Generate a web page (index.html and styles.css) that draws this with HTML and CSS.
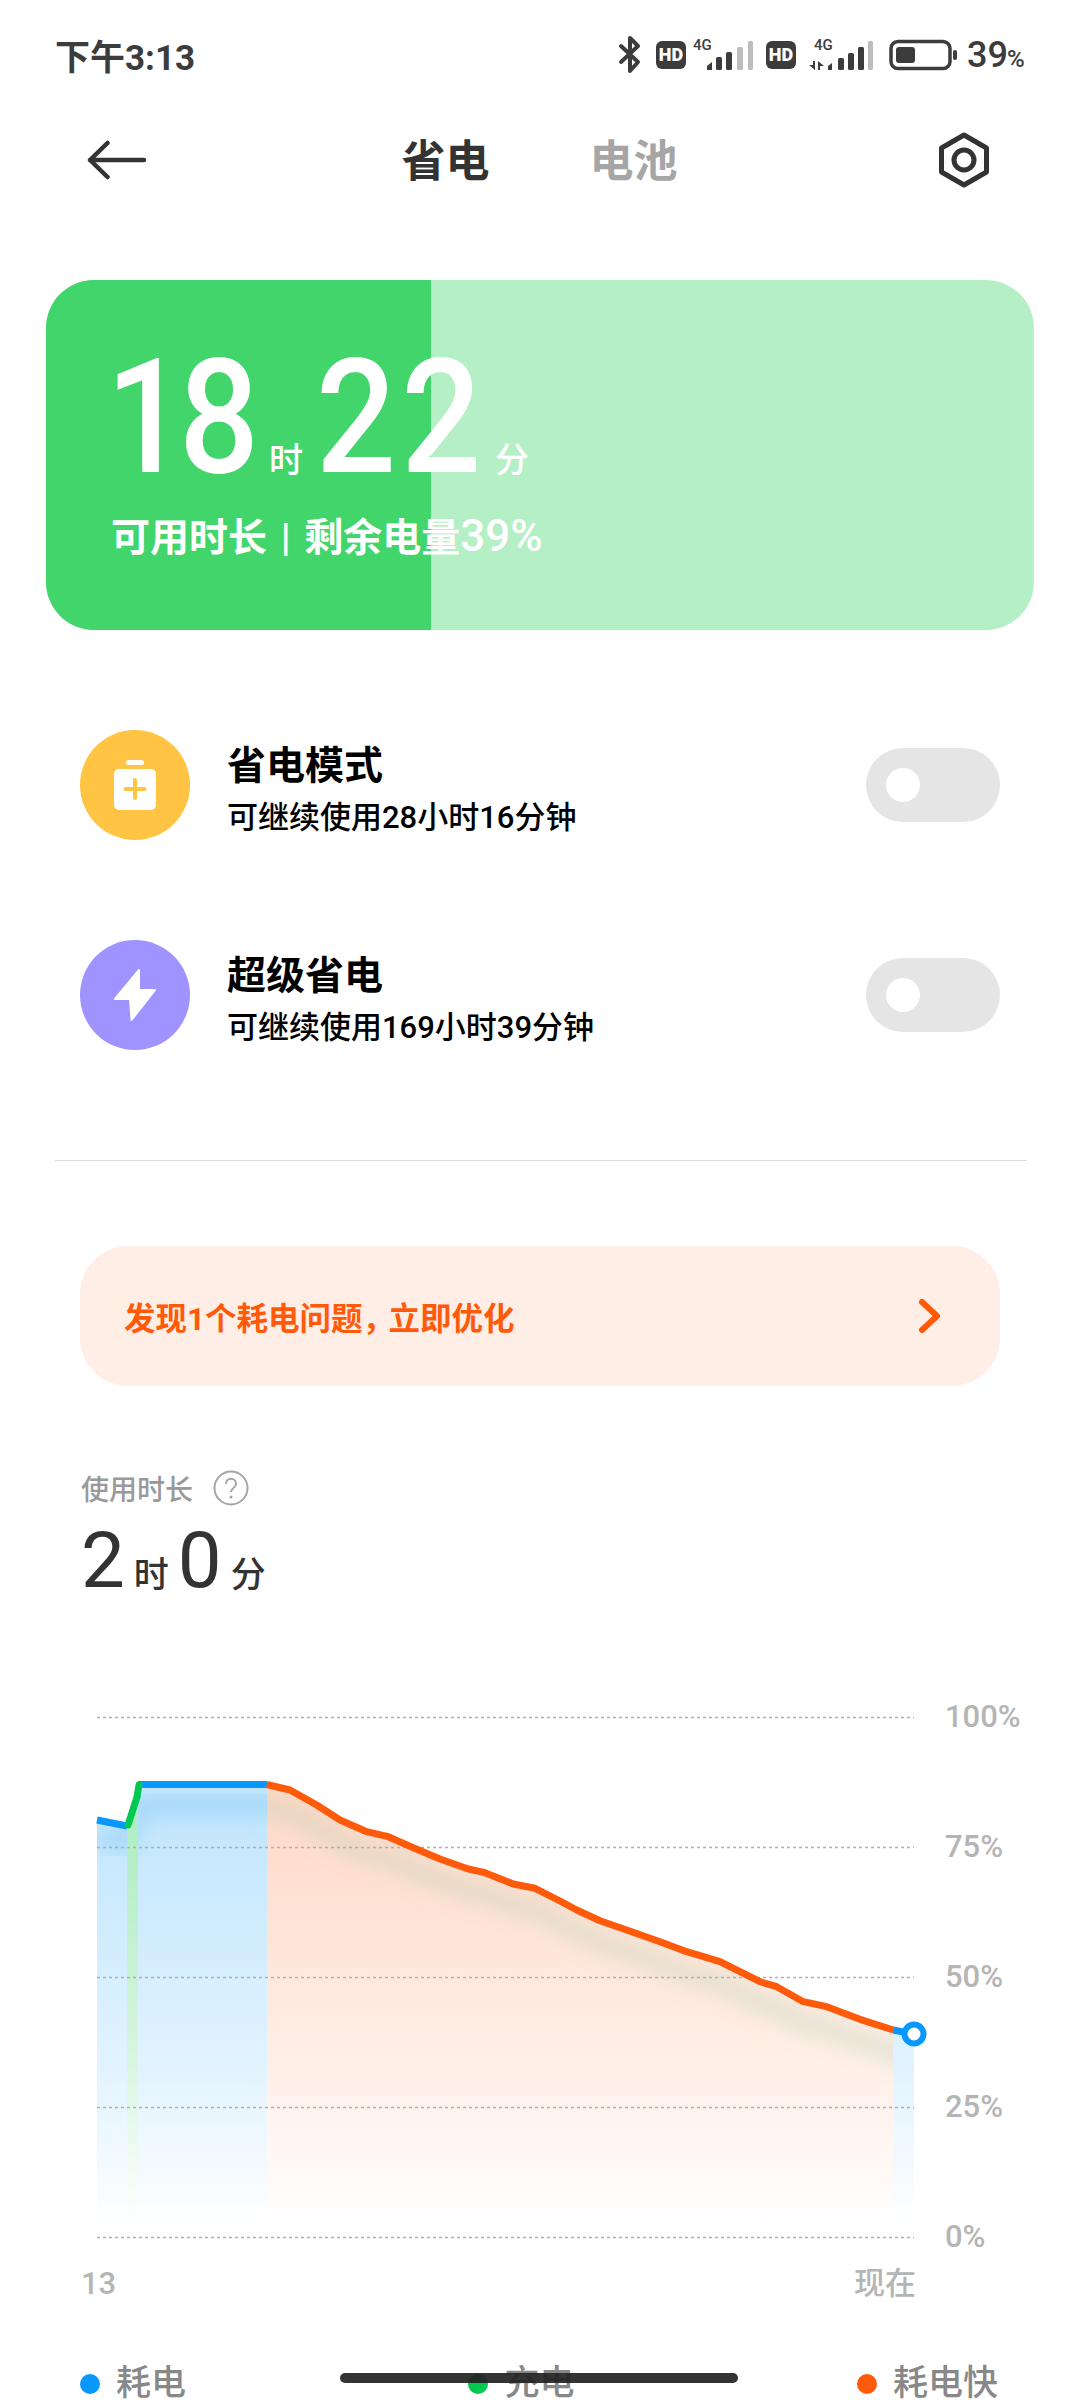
FILE: index.html
```html
<!DOCTYPE html>
<html lang="zh-CN">
<head>
    <meta charset="UTF-8">
    <meta name="viewport" content="width=device-width, initial-scale=1.0">
    <title>省电</title>
    <link rel="stylesheet" href="styles.css">
</head>
<body>
    <div class="phone">
        <div class="status-bar">
            <span class="clock">下午3:13</span>
            <svg class="status-icons" width="420" height="44" viewBox="618 30 420 44">
                <!-- bluetooth -->
                <path d="M621 43 L638 59 L630 68 L630 35 L638 43 L621 59" fill="none" stroke="#3c3c3c" stroke-width="4" stroke-linejoin="round" stroke-linecap="round"/>
                <!-- sim 1 -->
                <rect x="656" y="38" width="30" height="28" rx="6" fill="#3c3c3c"/>
                <text class="hd-text" x="671" y="58">HD</text>
                <text class="net-text" x="693" y="47">4G</text>
                <path d="M707 63 L712 59 V67 H707 Z" fill="#3c3c3c"/>
                <rect x="716" y="54" width="6" height="13" rx="1.5" fill="#3c3c3c"/>
                <rect x="726" y="49" width="6" height="18" rx="1.5" fill="#3c3c3c"/>
                <rect x="737" y="44" width="6" height="23" rx="1.5" fill="#bdbdbd"/>
                <rect x="748" y="38" width="5" height="29" rx="1.5" fill="#bdbdbd"/>
                <!-- sim 2 -->
                <rect x="766" y="38" width="30" height="28" rx="6" fill="#3c3c3c"/>
                <text class="hd-text" x="781" y="58">HD</text>
                <text class="net-text" x="814" y="47">4G</text>
                <path d="M809 62 H813 V58 H815 V67 L809 62 Z M818 58 L824 63 H820 V67 H818 Z" fill="#3c3c3c"/>
                <path d="M828 63 L832 60 V67 H828 Z" fill="#3c3c3c"/>
                <rect x="838" y="55" width="6" height="12" rx="1.5" fill="#3c3c3c"/>
                <rect x="848" y="50" width="6" height="17" rx="1.5" fill="#3c3c3c"/>
                <rect x="858" y="44" width="6" height="23" rx="1.5" fill="#3c3c3c"/>
                <rect x="868" y="38" width="5" height="29" rx="1.5" fill="#bdbdbd"/>
                <!-- battery -->
                <rect x="891" y="38.500" width="59" height="27" rx="7" fill="none" stroke="#3c3c3c" stroke-width="3.500"/>
                <rect x="896" y="44" width="19" height="16" rx="3" fill="#3c3c3c"/>
                <rect x="953" y="47" width="4" height="10" rx="2" fill="#3c3c3c"/>
                <text class="batt-num" x="967" y="64">39</text>
                <text class="batt-pct" x="1007" y="64">%</text>
            </svg>
        </div>

        <div class="top-bar">
            <svg class="back-icon" width="60" height="44" viewBox="87 138 60 44">
                <path d="M144 160 H90 M107.500 143 L90 160 L107.500 177" fill="none" stroke="#333" stroke-width="4.500" stroke-linecap="round" stroke-linejoin="round"/>
            </svg>
            <div class="tabs">
                <span class="tab tab-active">省电</span>
                <span class="tab">电池</span>
            </div>
            <svg class="gear-icon" width="52" height="58" viewBox="938 131 52 58">
                <path d="M964 135 L986.500 148 V172 L964 185 L941.500 172 V148 Z" fill="none" stroke="#333" stroke-width="5" stroke-linejoin="round"/>
                <circle cx="964" cy="160" r="10" fill="none" stroke="#333" stroke-width="5"/>
            </svg>
        </div>

        <div class="battery-card">
            <div class="battery-fill"></div>
            <div class="battery-text">
                <div class="time-left">
                    <span class="big-num num-tight">18</span>
                    <span class="big-unit unit-hour">时</span>
                    <span class="big-num">22</span>
                    <span class="big-unit unit-min">分</span>
                </div>
                <div class="time-note">可用时长 | 剩余电量<span class="note-num">39%</span></div>
            </div>
        </div>

        <div class="mode-row">
            <div class="mode-icon icon-yellow">
                <svg width="44" height="52" viewBox="0 0 44 52">
                    <rect x="13" y="1" width="18" height="5" rx="2.500" fill="#fff"/>
                    <rect x="1" y="10" width="42" height="41" rx="5" fill="#fff"/>
                    <path d="M22 21 V39 M12.500 30 H31.500" stroke="#ffc443" stroke-width="4" stroke-linecap="round"/>
                </svg>
            </div>
            <div class="mode-info">
                <div class="mode-title">省电模式</div>
                <div class="mode-desc">可继续使用28小时16分钟</div>
            </div>
            <div class="switch"><div class="switch-knob"></div></div>
        </div>

        <div class="mode-row">
            <div class="mode-icon icon-purple">
                <svg width="44" height="54" viewBox="0 0 44 54">
                    <path d="M26 2 L2 31 H17 L18.500 52 L42 22 H26 Z" fill="#fff" stroke="#fff" stroke-width="2" stroke-linejoin="round"/>
                </svg>
            </div>
            <div class="mode-info">
                <div class="mode-title">超级省电</div>
                <div class="mode-desc">可继续使用169小时39分钟</div>
            </div>
            <div class="switch"><div class="switch-knob"></div></div>
        </div>

        <div class="divider"></div>

        <div class="alert-banner">
            <span class="alert-text">发现1个耗电问题<span class="comma">，</span>立即优化</span>
            <svg width="22" height="34" viewBox="0 0 22 34">
                <path d="M3 3 L18 17 L3 31" fill="none" stroke="#ff5a0a" stroke-width="6" stroke-linecap="round" stroke-linejoin="round"/>
            </svg>
        </div>

        <div class="usage">
            <div class="usage-head">
                <span class="usage-label">使用时长</span>
                <svg width="36" height="36" viewBox="0 0 36 36">
                    <circle cx="18" cy="18" r="16.500" fill="none" stroke="#a5a5a5" stroke-width="2"/>
                    <path d="M13 14 C13 7 23 7 23 14 C23 18 18 18 18 22" fill="none" stroke="#a5a5a5" stroke-width="2"/>
                    <circle cx="18" cy="27" r="1.500" fill="#a5a5a5"/>
                </svg>
            </div>
            <div class="usage-time">
                <span class="usage-num">2</span>
                <span class="usage-unit">时</span>
                <span class="usage-num">0</span>
                <span class="usage-unit">分</span>
            </div>
        </div>

        <svg class="chart" width="1080" height="640" viewBox="0 1680 1080 640">
            <defs>
                <linearGradient id="blueFade" gradientUnits="userSpaceOnUse" x1="0" y1="1784" x2="0" y2="2225">
                    <stop offset="0" stop-color="#bfe5fc"/>
                    <stop offset="0.6" stop-color="#dff2ff"/>
                    <stop offset="0.8" stop-color="#eef8ff"/>
                    <stop offset="1" stop-color="#fff"/>
                </linearGradient>
                <linearGradient id="greenFade" gradientUnits="userSpaceOnUse" x1="0" y1="1784" x2="0" y2="2225">
                    <stop offset="0" stop-color="#a8ecbd"/>
                    <stop offset="0.6" stop-color="#d6f5df"/>
                    <stop offset="1" stop-color="#fff"/>
                </linearGradient>
                <linearGradient id="orangeFade" gradientUnits="userSpaceOnUse" x1="0" y1="1784" x2="0" y2="2225">
                    <stop offset="0" stop-color="#ffd8c6"/>
                    <stop offset="0.6" stop-color="#ffeee6"/>
                    <stop offset="0.8" stop-color="#fff6f1"/>
                    <stop offset="1" stop-color="#fff"/>
                </linearGradient>
                <filter id="soft" x="-10%" y="-30%" width="120%" height="160%">
                    <feGaussianBlur stdDeviation="9"/>
                </filter>
                <clipPath id="underCurve">
                    <path d="M97 1820 L127 1826 L137 1797 L139 1784.500 H266.700 L290 1790 L316.700 1805 L340 1820 L366.700 1831.700 L388.300 1836.700 L413.300 1847.700 L440 1859 L468.300 1869 L485 1872.700 L513.300 1884 L535 1888.300 L560 1901 L576.700 1910 L600 1920.700 L626.700 1930 L660 1941.700 L686.700 1951.700 L720 1961.700 L760 1981.700 L776.700 1986.700 L803.300 2001.700 L826.700 2006.700 L860 2019.300 L893.300 2030 L914 2034 V2237 H97 Z"/>
                </clipPath>
                <clipPath id="blueSide">
                    <rect x="97" y="1780" width="170" height="460"/>
                </clipPath>
                <clipPath id="orangeSide">
                    <rect x="267" y="1780" width="626" height="460"/>
                </clipPath>
            </defs>

            <g clip-path="url(#underCurve)">
                <rect x="97" y="1780" width="170" height="460" fill="url(#blueFade)"/>
                <rect x="267" y="1780" width="626" height="460" fill="url(#orangeFade)"/>
                <rect x="893" y="1780" width="21" height="460" fill="url(#blueFade)"/>
                <!-- darker band that follows the line -->
                <g clip-path="url(#blueSide)">
                    <path d="M97 1838 L127 1844 L139 1806 H290" fill="none" stroke="#6cbcf2" stroke-opacity="0.300" stroke-width="22" filter="url(#soft)"/>
                </g>
                <g clip-path="url(#orangeSide)">
                    <path d="M240 1806 H266.700 L290 1812 L316.700 1827 L340 1842 L366.700 1853.700 L388.300 1858.700 L413.300 1869.700 L440 1881 L468.300 1891 L485 1894.700 L513.300 1906 L535 1910.300 L560 1923 L576.700 1932 L600 1942.700 L626.700 1952 L660 1963.700 L686.700 1973.700 L720 1983.700 L760 2003.700 L776.700 2008.700 L803.300 2023.700 L826.700 2028.700 L860 2041.300 L893.300 2052 L920 2062" fill="none" stroke="#8fc7a0" stroke-opacity="0.220" stroke-width="22" filter="url(#soft)"/>
                </g>
                <rect x="127" y="1780" width="11" height="460" fill="url(#greenFade)"/>
            </g>

            <g class="grid-lines">
                <line x1="97" y1="1717.500" x2="914" y2="1717.500"/>
                <line x1="97" y1="1847.500" x2="914" y2="1847.500"/>
                <line x1="97" y1="1977.500" x2="914" y2="1977.500"/>
                <line x1="97" y1="2107.500" x2="914" y2="2107.500"/>
                <line x1="97" y1="2237.500" x2="914" y2="2237.500"/>
            </g>

            <g fill="none" stroke-width="7" stroke-linejoin="round">
                <path d="M97 1820 L127 1826" stroke="#0896ff"/>
                <path d="M138 1784.500 H267" stroke="#0896ff"/>
                <path d="M893 2030 L914 2034" stroke="#0896ff"/>
                <path d="M128 1825 L137 1797 L139 1785" stroke="#00c94f" stroke-linecap="round"/>
                <path d="M266.700 1784.500 L290 1790 L316.700 1805 L340 1820 L366.700 1831.700 L388.300 1836.700 L413.300 1847.700 L440 1859 L468.300 1869 L485 1872.700 L513.300 1884 L535 1888.300 L560 1901 L576.700 1910 L600 1920.700 L626.700 1930 L660 1941.700 L686.700 1951.700 L720 1961.700 L760 1981.700 L776.700 1986.700 L803.300 2001.700 L826.700 2006.700 L860 2019.300 L893.300 2030" stroke="#ff5a0a"/>
            </g>
            <circle cx="914" cy="2034" r="9.500" fill="#fff" stroke="#0896ff" stroke-width="6"/>

            <g class="axis-text">
                <text x="945" y="1727">100%</text>
                <text x="945" y="1857">75%</text>
                <text x="945" y="1987">50%</text>
                <text x="945" y="2117">25%</text>
                <text x="945" y="2247">0%</text>
                <text x="81" y="2294">13</text>
                <text x="854" y="2294">现在</text>
            </g>
        </svg>

        <div class="legend">
            <div class="legend-item"><span class="dot dot-blue"></span>耗电</div>
            <div class="legend-item"><span class="dot dot-green"></span>充电</div>
            <div class="legend-item"><span class="dot dot-orange"></span>耗电快</div>
        </div>

        <div class="home-pill"></div>
    </div>
</body>
</html>
```

FILE: styles.css
```css
html, body {
    margin: 0;
    padding: 0;
    background-color: #fff;
}

.phone {
    position: relative;
    width: 1080px;
    height: 2400px;
    overflow: hidden;
    background-color: #fff;
    font-family: Roboto, "Noto Sans CJK SC", sans-serif;
    color: #333;
}

.status-bar {
    height: 108px;
    display: flex;
    align-items: center;
    justify-content: space-between;
    padding-left: 55px;
    padding-right: 42px;
    box-sizing: border-box;
}

.clock {
    font-size: 35px;
    font-weight: 700;
    color: #3c3c3c;
}

.status-icons {
    display: block;
    margin-top: 2px;
}

.hd-text {
    font-family: Roboto, sans-serif;
    font-size: 18px;
    font-weight: 900;
    fill: #fff;
    text-anchor: middle;
}

.net-text {
    font-family: Roboto, sans-serif;
    font-size: 15px;
    font-weight: 500;
    fill: #3c3c3c;
}

.batt-num {
    font-family: Roboto, sans-serif;
    font-size: 36px;
    font-weight: 500;
    fill: #3c3c3c;
}

.batt-pct {
    font-family: Roboto, sans-serif;
    font-size: 24px;
    font-weight: 500;
    fill: #3c3c3c;
}

.top-bar {
    height: 104px;
    display: flex;
    align-items: center;
    position: relative;
    padding-left: 87px;
    padding-right: 90px;
    justify-content: space-between;
}

.tabs {
    display: flex;
    gap: 100px;
    margin-top: 3px;
    margin-right: 6px;
}

.tab {
    font-size: 44px;
    font-weight: 700;
    color: #a6a6a6;
    line-height: 44px;
}

.tab-active {
    color: #333;
}

.battery-card {
    position: relative;
    margin: 68px 46px 0;
    height: 350px;
    border-radius: 48px;
    overflow: hidden;
    background-color: #b5efc6;
}

.battery-fill {
    position: absolute;
    left: 0;
    top: 0;
    bottom: 0;
    width: 385px;
    background-color: #42d56c;
}

.battery-text {
    position: relative;
    padding-left: 60px;
    color: #fff;
}

.time-left {
    display: flex;
    align-items: baseline;
    padding-top: 60px;
}

.big-num {
    width: 169px;
    font-size: 160px;
    font-weight: 500;
    line-height: 155px;
    letter-spacing: 6px;
    transform: scaleX(0.88);
    transform-origin: left;
}

.num-tight {
    letter-spacing: -8px;
}

.big-unit {
    font-size: 34px;
    font-weight: 500;
    line-height: 40px;
}

.unit-hour {
    margin-left: -6px;
    margin-right: 13px;
}

.unit-min {
    margin-left: 10px;
}

.time-note {
    font-size: 39px;
    font-weight: 700;
    line-height: 46px;
    margin-top: 18px;
    margin-left: 5px;
    word-spacing: 4px;
}

.note-num {
    font-size: 44px;
    font-weight: 500;
}

.mode-row {
    height: 210px;
    display: flex;
    align-items: center;
    padding-left: 80px;
    padding-right: 80px;
}

.battery-card + .mode-row {
    margin-top: 50px;
}

.mode-icon {
    width: 110px;
    height: 110px;
    border-radius: 50%;
    display: flex;
    align-items: center;
    justify-content: center;
    flex-shrink: 0;
}

.icon-yellow {
    background-color: #ffc443;
}

.icon-purple {
    background-color: #9f94ff;
}

.mode-info {
    flex: 1;
    margin-left: 37px;
    padding-top: 8px;
    color: #000;
}

.mode-title {
    font-size: 39px;
    font-weight: 700;
    line-height: 50px;
}

.mode-desc {
    font-size: 31px;
    font-weight: 500;
    line-height: 40px;
    margin-top: 7px;
}

.switch {
    width: 134px;
    height: 74px;
    border-radius: 37px;
    background-color: #e5e5e5;
    display: flex;
    align-items: center;
    padding-left: 20px;
    box-sizing: border-box;
}

.switch-knob {
    width: 34px;
    height: 34px;
    border-radius: 50%;
    background-color: #fff;
}

.divider {
    height: 1px;
    margin: 60px 53px 0 55px;
    background-color: #dcdcdc;
}

.alert-banner {
    margin: 85px 80px 0;
    height: 140px;
    border-radius: 48px;
    background-color: #ffeee6;
    display: flex;
    align-items: center;
    justify-content: space-between;
    padding-left: 44px;
    padding-right: 59px;
}

.alert-text {
    font-size: 31.500px;
    font-weight: 700;
    color: #ff5a0a;
}

.comma {
    letter-spacing: -5.500px;
}

.usage {
    padding-left: 81px;
    margin-top: 83px;
}

.usage-head {
    display: flex;
    align-items: center;
    gap: 20px;
    height: 38px;
}

.usage-label {
    font-size: 28px;
    font-weight: 500;
    color: #999;
}

.usage-time {
    display: flex;
    align-items: baseline;
    margin-top: 9px;
}

.usage-num {
    font-size: 78px;
    font-weight: 400;
    line-height: 90px;
    margin-right: 9px;
}

.usage-unit {
    font-size: 35px;
    font-weight: 500;
    line-height: 40px;
    margin-right: 9px;
}

.chart {
    display: block;
    margin-top: 74px;
}

.grid-lines line {
    stroke: #b0b0b0;
    stroke-width: 1.500;
    stroke-dasharray: 3 3;
}

.axis-text text {
    font-size: 31px;
    font-weight: 500;
    fill: #b5b5b5;
}

.legend {
    display: flex;
    justify-content: space-between;
    padding-left: 80px;
    padding-right: 82px;
    margin-top: 39px;
}

.legend-item {
    display: flex;
    align-items: center;
    gap: 16px;
    font-size: 35px;
    font-weight: 500;
    color: #888;
    line-height: 50px;
}

.dot {
    width: 20px;
    height: 20px;
    border-radius: 50%;
}

.dot-blue {
    background-color: #0896ff;
}

.dot-green {
    background-color: #00c94f;
}

.dot-orange {
    background-color: #ff5a0a;
}

.home-pill {
    position: absolute;
    left: 340px;
    top: 2373px;
    width: 398px;
    height: 10px;
    border-radius: 5px;
    background-color: rgba(34, 34, 34, 0.92);
}
```
